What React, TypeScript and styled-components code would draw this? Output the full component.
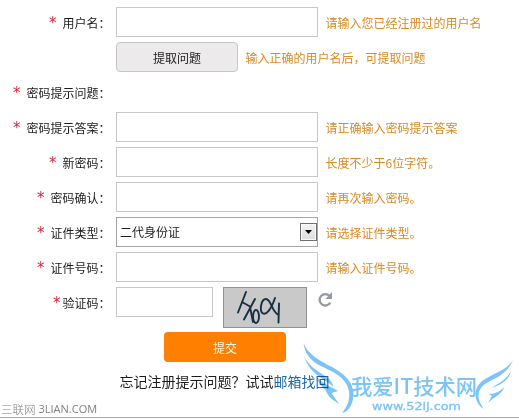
import React from "react";
import styled, { createGlobalStyle } from "styled-components";

const GlobalStyle = createGlobalStyle`
  *, *::before, *::after { box-sizing: border-box; }
  html, body { margin: 0; padding: 0; background: #fff; overflow: hidden; }
  body { font-family: "Noto Sans CJK SC", sans-serif; font-size: 12px; color: #1c1c1c; }
`;

const Page = styled.main`
  position: relative;
  width: 519px;
  height: 419px;
  padding-top: 7px;
  display: flex;
  flex-direction: column;
  background: #fff;
`;

const Form = styled.form`
  display: flex;
  flex-direction: column;
  gap: 5px;
`;

const Row = styled.div`
  display: grid;
  grid-template-columns: 110.5px 1fr;
  grid-template-rows: 30px;
  column-gap: 5.5px;
  height: 30px;
`;

const Label = styled.label<{ $gap: number }>`
  display: flex;
  justify-content: flex-end;
  align-items: center;
  gap: ${(p) => p.$gap}px;
  padding-top: 2px;
  line-height: 18px;
  white-space: nowrap;
`;

const Star = styled.span`
  color: #d42a3c;
  font: 15px/18px "DejaVu Sans", sans-serif;
`;

const Controls = styled.div`
  display: flex;
  align-items: flex-start;
`;

const TextInput = styled.input<{ $width: number }>`
  width: ${(p) => p.$width}px;
  height: 30px;
  padding: 0 4px;
  border: 1px solid #c8c8c8;
  background: #fff;
  font: inherit;
  outline: none;
`;

const Select = styled.div`
  width: 202px;
  height: 30px;
  display: flex;
  align-items: center;
  justify-content: space-between;
  padding: 0 0 0 3px;
  border: 1px solid #a6a6a6;
  line-height: 18px;
`;

const Arrow = styled.span`
  width: 17px;
  height: 18px;
  display: flex;
  align-items: center;
  justify-content: center;
  border: 1px solid #6f6f6f;
  background: linear-gradient(#f4f4f4, #dcdcdc);
  box-shadow: inset 0 0 0 1px #fafafa;
`;

const GrayButton = styled.button`
  width: 122px;
  height: 30px;
  padding: 2px 0 0;
  border: 1px solid #c6c6c6;
  border-radius: 4px;
  background: #eceaeb;
  color: #1c1c1c;
  font: inherit;
  line-height: 18px;
`;

const Hint = styled.span`
  height: 30px;
  margin-left: 7.5px;
  padding-top: 1px;
  display: flex;
  align-items: center;
  color: #d98a22;
  line-height: 18px;
  white-space: nowrap;
`;

const Captcha = styled.div`
  width: 84px;
  height: 41px;
  margin-left: 10px;
  border: 1px solid #929292;
  background: #c9c9c9;
  flex: none;
  svg { display: block; }
`;

const Refresh = styled.svg`
  margin: 4px 0 0 10px;
  display: block;
`;

const Submit = styled.button`
  width: 122px;
  height: 30px;
  margin: 15px 0 0 164px;
  padding: 2px 0 0;
  border: 0;
  border-radius: 4px;
  background: #ff8000;
  color: #fff3d9;
  font: inherit;
  line-height: 18px;
`;

const Recover = styled.p`
  margin: 8px 0 0 119.5px;
  font-size: 14px;
  line-height: 22px;
  white-space: nowrap;
  a { color: #1c69a6; text-decoration: none; }
`;

const Footer = styled.footer`
  position: absolute;
  left: 0;
  right: 0;
  bottom: 1px;
  height: 16px;
  border-bottom: 1px solid #74bccd;
  padding-left: 1px;
  display: flex;
  gap: 3px;
  color: #808080;
  font: 300 11.5px/14px "Noto Sans CJK SC", sans-serif;
  white-space: nowrap;
`;

const Domain = styled.span`
  font: 11px/14px "Open Sans", sans-serif;
`;

const Watermark = styled.svg`
  position: absolute;
  left: 296px;
  top: 336px;
  mix-blend-mode: multiply;
  pointer-events: none;
`;

type FieldProps = { label: string; gap?: number; hint?: string; children?: React.ReactNode };

const Field = ({ label, gap = 6, hint, children }: FieldProps) => (
  <Row>
    <Label $gap={gap}>
      {label && <Star>*</Star>}
      {label}
    </Label>
    <Controls>
      {children}
      {hint && <Hint>{hint}</Hint>}
    </Controls>
  </Row>
);

export default function App() {
  return (
    <>
      <GlobalStyle />
      <Page>
        <Form onSubmit={(e) => e.preventDefault()}>
          <Field label="用户名：" hint="请输入您已经注册过的用户名"><TextInput $width={202} /></Field>
          <Field label="" hint="输入正确的用户名后，可提取问题"><GrayButton type="button">提取问题</GrayButton></Field>
          <Field label="密码提示问题：" />
          <Field label="密码提示答案：" hint="请正确输入密码提示答案"><TextInput $width={202} /></Field>
          <Field label="新密码：" hint="长度不少于6位字符。"><TextInput $width={202} type="password" /></Field>
          <Field label="密码确认：" hint="请再次输入密码。"><TextInput $width={202} type="password" /></Field>
          <Field label="证件类型：" hint="请选择证件类型。">
            <Select role="combobox">
              二代身份证
              <Arrow><svg width="7" height="4"><path d="M0 0H7L3.5 4Z" fill="#000" /></svg></Arrow>
            </Select>
          </Field>
          <Field label="证件号码：" hint="请输入证件号码。"><TextInput $width={202} /></Field>
          <Field label="验证码：" gap={2}>
            <TextInput $width={97} />
            <Captcha>
              <svg width="82" height="39" viewBox="0 0 82 39" fill="none" stroke="#17303f" strokeWidth="1.9" strokeLinecap="round" strokeLinejoin="round">
                <path d="M22 4L14 24.5M18 14L26 18.5M31 11L20 31.5M26 19L29 34" />
                <ellipse cx="32" cy="28.5" rx="3" ry="6.5" />
                <path d="M51 10C47 22 42 27 39 25.5C35 23 37 11 42 11C47 11 48 24 54 26.5M55 15.5L54.5 34.5" />
              </svg>
            </Captcha>
            <Refresh width="17" height="18" viewBox="0 0 17 18">
              <path d="M13.3 11.6A5.7 5.7 0 1 1 12.6 5" fill="none" stroke="#969aa0" strokeWidth="2.3" />
              <path d="M15 1V8H8.5Z" fill="#969aa0" />
            </Refresh>
          </Field>
        </Form>
        <Submit type="submit">提交</Submit>
        <Recover>忘记注册提示问题？试试<a href="#mail">邮箱找回</a></Recover>
        <Footer>三联网<Domain>3LIAN.COM</Domain></Footer>
        <Watermark width="223" height="83" viewBox="0 0 223 83" fill="#7cc4f5">
          <path d="M7.500 7C12 18 22 24 36 31C49 38 58 47 57.500 59C57 69 52 76 46 77C52 70 54 63 53 55C51 45 43 38 30 32.500C17 27 9 20 7.500 7Z" />
          <path d="M8 20C12 29 20 34 29 40C34 43 37 47 37 51C31 43 14 40 8 20Z" />
          <path d="M20 40C25 47 34 50 42 55L35.500 57L43 68C37 64 32 61 29.500 54C25 50 22 46 20 40Z" />
          <path d="M217 24C212 36 204 40 194 45C181 51 179 62 188 73C177 66 176 51 189 43C201 36 211 34 217 24Z" />
          <path d="M215 35C213 44 205 49 195 52C203 47 210 44 215 35Z" />
          <path d="M208.500 51C205 59 199 60 192 67L196 60L193 58C200 58 204 55 208.500 51Z" />
          <text x="55" y="58" fontFamily="Noto Sans CJK SC, sans-serif" fontSize="21" fontWeight="500" textLength="126" lengthAdjust="spacingAndGlyphs">我爱IT技术网</text>
          <text x="76" y="74" fontFamily="DejaVu Sans, sans-serif" fontSize="10" stroke="#7cc4f5" strokeWidth="0.3" textLength="89" lengthAdjust="spacingAndGlyphs">www.52ij.com</text>
        </Watermark>
      </Page>
    </>
  );
}
